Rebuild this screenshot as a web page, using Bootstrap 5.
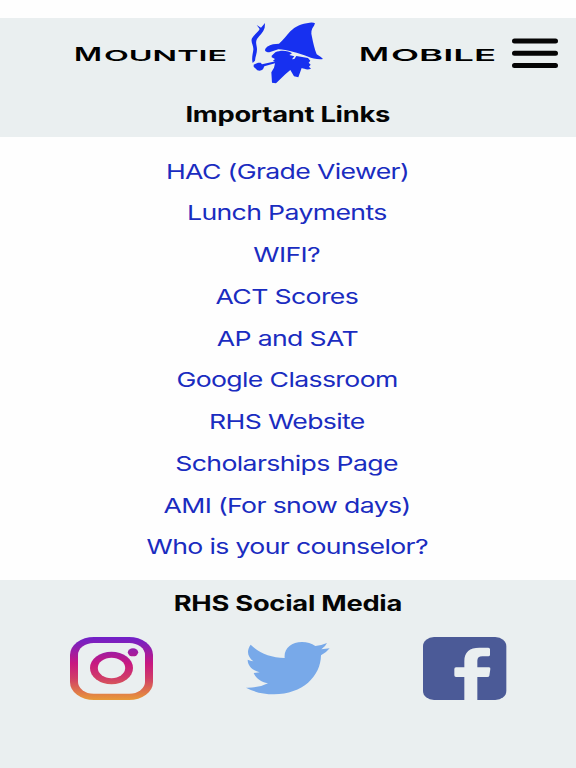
<!DOCTYPE html>
<html lang="en">
<head>
    <meta charset="UTF-8">
    <meta name="viewport" content="width=device-width, initial-scale=1.0">
    <title>Mountie Mobile - Important Links</title>

    <!-- Bootstrap 5 -->
    <link rel="stylesheet" href="https://cdn.jsdelivr.net/npm/bootstrap@5.3.0/dist/css/bootstrap.min.css">

    <style>
        body {
            font-family: Inter, "Liberation Sans", sans-serif;
            color: #050505;
            background: #fefefe;
            min-height: 768px;
            padding-top: 18px;
            overflow-x: hidden;
        }
        .panel {
            background-color: #eaeff0;
        }
        .top-panel {
            height: 119px;
        }
        .brand-row {
            height: 72px;
            padding: 0 17px 0 75px;
        }
        .brand-row svg {
            display: block;
            flex: none;
        }
        .word-left {
            margin-right: 14px;
        }
        .word-right {
            margin-left: 25px;
        }
        .menu-btn {
            margin-left: 15px;
        }
        .wide {
            display: inline-block;
            white-space: nowrap;
            transform: scaleX(1.3);
        }
        .section-title {
            font-size: 21px;
            line-height: 28px;
            font-weight: 700;
            letter-spacing: -.2px;
            margin: 0;
        }
        .top-panel .section-title {
            padding-top: 11px;
        }
        .links {
            height: 443px;
            padding: 13.6px 2px 0 0;
        }
        .links a {
            height: 41.75px;
            line-height: 41.75px;
            font-size: 20.5px;
            letter-spacing: -.5px;
            color: #1a2cc0;
            text-decoration: none;
        }
        .social-panel .section-title {
            padding-top: 10px;
        }
        .social-row {
            margin-top: 12px;
            padding: 0 59px 0 60px;
        }
        .social-row svg {
            display: block;
        }
    </style>
</head>
<body class="d-flex flex-column">

    <!-- Header -->
    <header class="panel top-panel text-center">
        <div class="brand-row d-flex align-items-center">
            <svg class="word-left" width="151" height="72" viewBox="0 0 151 72" font-family="Inter, sans-serif" font-weight="600">
                <text x="-1" y="42.800" font-size="18" textLength="28" lengthAdjust="spacingAndGlyphs">M</text>
                <text x="29" y="42.800" font-size="15" textLength="123" lengthAdjust="spacingAndGlyphs">OUNTIE</text>
            </svg>
            <svg width="95" height="72" viewBox="2 9 285 216" fill="#1730f0">
                <path d="M77 106 C78 98 88 91 101 88 L119 86 C132 76 141 62 153 49 C167 34 187 26 211 23 Q223 22 227 25 L224 32 C216 42 214 52 218 66 C221 82 226 103 232 118 Q244 125 251 132 C236 134 218 130 207 125 C176 114 143 104 117 103 L90 112 Q79 112 77 106Z"/>
                <path d="M97 122 L108 112 C125 104 148 107 158 115 L150 120 L165 124 L158 133 L165 132 L171 123 L206 129 L213 137 L208 143 L214 149 L209 155 L215 161 C203 166 195 161 187 159 L177 187 L164 184 L153 165 L138 178 L124 191 L110 205 L98 203 L96 172 L104 158 L108 141 L101 137 L107 132 L97 127Z"/>
                <path d="M77 24 L76 38 C72 52 61 60 53 72 C47 82 53 92 53 103 C53 115 48 126 47 137 L40 144 C36 130 41 114 42 104 C43 91 33 81 38 70 C45 58 58 49 61 42 L52 30 L65 38Z"/>
                <path d="M43 149 L56 143 L64 143 L68 148 L109 139 L110 144 L75 154 L71 163 Q64 169 54 166 L43 155Z"/>
            </svg>
            <svg class="word-right" width="136" height="72" viewBox="0 0 136 72" font-family="Inter, sans-serif" font-weight="600">
                <text x="-1" y="42.800" font-size="19" textLength="30" lengthAdjust="spacingAndGlyphs">M</text>
                <text x="31" y="42.800" font-size="16" textLength="105" lengthAdjust="spacingAndGlyphs">OBILE</text>
            </svg>
            <a href="#" class="menu-btn" aria-label="Menu">
                <svg width="48" height="72" viewBox="0 0 48 72" stroke="#050505" stroke-width="5" stroke-linecap="round">
                    <path d="M3.500 23H44.500M3.500 35.300H44.500M3.500 47.600H44.500"/>
                </svg>
            </a>
        </div>
        <h1 class="section-title"><span class="wide">Important Links</span></h1>
    </header>

    <!-- Links -->
    <main class="links d-flex flex-column align-items-center">
        <a href="#"><span class="wide">HAC (Grade Viewer)</span></a>
        <a href="#"><span class="wide">Lunch Payments</span></a>
        <a href="#"><span class="wide">WIFI?</span></a>
        <a href="#"><span class="wide">ACT Scores</span></a>
        <a href="#"><span class="wide">AP and SAT</span></a>
        <a href="#"><span class="wide">Google Classroom</span></a>
        <a href="#"><span class="wide">RHS Website</span></a>
        <a href="#"><span class="wide">Scholarships Page</span></a>
        <a href="#"><span class="wide">AMI (For snow days)</span></a>
        <a href="#"><span class="wide">Who is your counselor?</span></a>
    </main>

    <!-- Social media -->
    <footer class="panel social-panel flex-grow-1 text-center">
        <h2 class="section-title"><span class="wide">RHS Social Media</span></h2>
        <div class="social-row d-flex justify-content-between">
            <a href="#" aria-label="Instagram">
                <svg width="105" height="80" viewBox="0 0 315 240">
                    <defs>
                        <linearGradient id="insta" gradientUnits="userSpaceOnUse" x1="0" y1="21" x2="0" y2="210">
                            <stop offset="0" stop-color="#7020c8"/>
                            <stop offset=".12" stop-color="#8420b8"/>
                            <stop offset=".42" stop-color="#c81880"/>
                            <stop offset=".65" stop-color="#d03c68"/>
                            <stop offset="1" stop-color="#e89a38"/>
                        </linearGradient>
                    </defs>
                    <rect x="30" y="21" width="249" height="189" rx="72" ry="54" fill="url(#insta)"/>
                    <rect x="54" y="39" width="201" height="152" rx="47" ry="36" fill="#eaeff0"/>
                    <ellipse cx="154.500" cy="114" rx="64.500" ry="48.500" fill="url(#insta)"/>
                    <ellipse cx="154.500" cy="114" rx="41" ry="30.500" fill="#eaeff0"/>
                    <ellipse cx="219" cy="67" rx="15.500" ry="12" fill="url(#insta)"/>
                </svg>
            </a>
            <a href="#" aria-label="Twitter">
                <svg width="105" height="80" viewBox="4 0 315 240">
                    <path fill="#78a9e9" d="M48 44 C72 68 108 83 150 84 C147 55 170 36 202 36 Q225 36 242 48 Q260 46 277 39 Q272 50 260 58 L285 55 Q275 68 259 76 C258 139 204 193 118 193 Q71 193 34 173 Q74 174 100 160 C78 156 63 144 57 129 L75 127 C52 121 39 106 39 89 Q47 93 56 94 C38 79 35 62 48 44Z"/>
                </svg>
            </a>
            <a href="#" aria-label="Facebook">
                <svg width="105" height="80" viewBox="0 0 315 240">
                    <rect x="33" y="21" width="250" height="189" rx="33" ry="27" fill="#4b5a97"/>
                    <path fill="#eaeff0" d="M157 210 V141 H132 Q127 141 127 136 V117 Q127 112 132 112 H157 V93 C157 66 173 53 202 53 H229 Q234 53 234 58 V74 Q234 79 229 79 H211 Q196 79 196 92 V112 H231 Q236 112 235 117 L232 137 Q231 141 226 141 H196 V210Z"/>
                </svg>
            </a>
        </div>
    </footer>

    <script src="https://cdn.jsdelivr.net/npm/bootstrap@5.3.0/dist/js/bootstrap.bundle.min.js"></script>

</body>
</html>
